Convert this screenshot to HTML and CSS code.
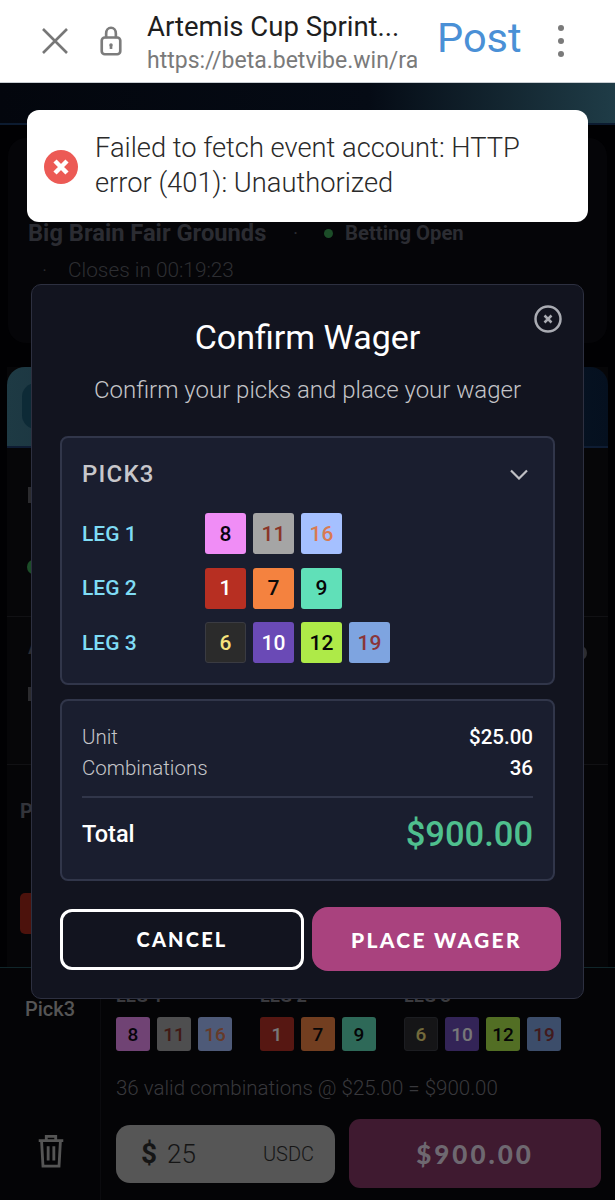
FILE: index.html
```html
<!DOCTYPE html>
<html lang="en">
<head>
<meta charset="utf-8">
<title>Artemis Cup Sprint</title>
<link rel="stylesheet" href="styles.css">
</head>
<body>
<header class="chrome">
  <svg class="chrome-x" viewBox="0 0 26 26"><path d="M1 1 25 25M25 1 1 25"/></svg>
  <svg class="chrome-lock" viewBox="0 0 24 34"><path d="M6.500 14V8.500a5.500 6.500 0 0 1 11 0V14"/><rect x="1.500" y="13" width="21" height="19" rx="3.500"/><circle cx="12" cy="21.500" r="2" class="fill"/><path d="M12 22v4"/></svg>
  <div class="chrome-titles">
    <div class="chrome-title">Artemis Cup Sprint...</div>
    <div class="chrome-url">https://beta.betvibe.win/ra</div>
  </div>
  <span class="chrome-post">Post</span>
  <div class="chrome-dots"><i></i><i></i><i></i></div>
</header>

<main class="page">
  <div class="hero"></div>
  <section class="event-card">
    <div class="event-line">
      <span class="event-name">Big Brain Fair Grounds</span>
      <span class="event-sep">·</span>
      <span class="event-dot"></span>
      <span class="event-status">Betting Open</span>
    </div>
    <div class="event-close"><span class="close-sep">·</span>Closes in 00:19:23</div>
  </section>
  <section class="market">
    <div class="market-head"><div class="market-logo"></div></div>
    <div class="market-row market-row-a"><span class="ghost-bar"></span><span class="ghost-dot"></span></div>
    <div class="market-row market-row-b"><span class="ghost-a">A</span><span class="ghost-bar2"></span><span class="ghost-knob"></span></div>
  </section>
  <section class="picks-block">
    <div class="ghost-p">P</div>
    <div class="ghost-red"></div>
  </section>
  <section class="slip">
    <div class="slip-side">
      <span class="slip-name">Pick3</span>
      <svg class="trash" viewBox="0 0 28 36"><path d="M1 7h26M9 6V2.500h10V6M4 7l1.500 27h17L24 7M11 13v15M17 13v15"/></svg>
    </div>
    <div class="slip-main">
      <div class="slip-legs">
        <div class="slip-leg"><span class="slip-leg-name">LEG 1</span><div class="slip-chips">
          <span class="chip chip-small c8">8</span><span class="chip chip-small c11">11</span><span class="chip chip-small c16">16</span></div></div>
        <div class="slip-leg"><span class="slip-leg-name">LEG 2</span><div class="slip-chips">
          <span class="chip chip-small c1">1</span><span class="chip chip-small c7">7</span><span class="chip chip-small c9">9</span></div></div>
        <div class="slip-leg"><span class="slip-leg-name">LEG 3</span><div class="slip-chips">
          <span class="chip chip-small c6">6</span><span class="chip chip-small c10">10</span><span class="chip chip-small c12">12</span><span class="chip chip-small c19">19</span></div></div>
      </div>
      <p class="slip-note">36 valid combinations @ $25.00 = $900.00</p>
      <div class="slip-actions">
        <div class="slip-input"><b>$</b><span class="slip-amount">25</span><span class="slip-unit">USDC</span></div>
        <div class="slip-submit">$900.00</div>
      </div>
    </div>
  </section>
</main>

<div class="toast">
  <svg class="toast-icon" viewBox="0 0 34 34"><circle cx="17" cy="17" r="17"/><path d="M11 11 23 23M23 11 11 23"/></svg>
  <div class="toast-text">Failed to fetch event account: HTTP error (401): Unauthorized</div>
</div>

<div class="modal">
  <svg class="modal-close" viewBox="0 0 28 28"><circle cx="14" cy="14" r="12.500"/><path d="M10.500 10.500 17.500 17.500M17.500 10.500 10.500 17.500"/></svg>
  <h1 class="modal-title">Confirm Wager</h1>
  <p class="modal-sub">Confirm your picks and place your wager</p>
  <div class="panel panel-picks">
    <div class="panel-head">
      <span class="panel-name">PICK3</span>
      <svg class="chevron" viewBox="0 0 18 11"><path d="M1 1.500 9 9.500 17 1.500"/></svg>
    </div>
    <div class="leg">
      <span class="leg-name">LEG 1</span>
      <div class="chips"><span class="chip c8">8</span><span class="chip c11">11</span><span class="chip c16">16</span></div>
    </div>
    <div class="leg">
      <span class="leg-name">LEG 2</span>
      <div class="chips"><span class="chip c1">1</span><span class="chip c7">7</span><span class="chip c9">9</span></div>
    </div>
    <div class="leg">
      <span class="leg-name">LEG 3</span>
      <div class="chips"><span class="chip c6">6</span><span class="chip c10">10</span><span class="chip c12">12</span><span class="chip c19">19</span></div>
    </div>
  </div>
  <div class="panel panel-summary">
    <div class="sum-row"><span>Unit</span><b>$25.00</b></div>
    <div class="sum-row"><span>Combinations</span><b>36</b></div>
    <div class="sum-total"><span>Total</span><b>$900.00</b></div>
  </div>
  <div class="modal-actions">
    <button class="btn btn-cancel">CANCEL</button>
    <button class="btn btn-place">PLACE WAGER</button>
  </div>
</div>
</body>
</html>
```
FILE: styles.css
```css
* { box-sizing: border-box; }
html, body { margin: 0; padding: 0; }
body {
  position: relative;
  width: 615px;
  height: 1200px;
  overflow: hidden;
  background: #010103;
  font-family: Roboto, "Liberation Sans", sans-serif;
  display: flex;
  flex-direction: column;
}

/* browser bar */
.chrome {
  height: 83px;
  flex: none;
  background: #fff;
  border-bottom: 1px solid #c9ced3;
  display: flex;
  align-items: center;
  position: relative;
}
.chrome-x { width: 26px; height: 26px; margin-left: 42px; flex: none; fill: none; stroke: #777; stroke-width: 2.6; }
.chrome-lock { width: 24px; height: 30px; margin-left: 31px; flex: none; fill: none; stroke: #7c7c7c; stroke-width: 3; }
.chrome-lock .fill { fill: #7c7c7c; stroke: none; }
.chrome-titles { width: 270px; margin-left: 24px; flex: none; overflow: hidden; padding-top: 3px; }
.chrome-title { font-size: 27.500px; line-height: 32px; color: #1e1e1e; white-space: nowrap; }
.chrome-url { font-size: 23px; line-height: 29px; margin-top: 3px; color: #7a7a7a; white-space: nowrap; }
.chrome-post { margin: 0 0 6px 20px; font-size: 41.500px; line-height: 48px; color: #4a90d6; flex: none; }
.chrome-dots { margin-left: 36px; display: flex; flex-direction: column; gap: 7px; flex: none; }
.chrome-dots i { display: block; width: 6px; height: 6px; border-radius: 50%; background: #7a7a7a; }

/* dimmed page */
.page { flex: 1; display: flex; flex-direction: column; min-height: 0; }
.hero { height: 42px; flex: none; background: linear-gradient(90deg, #03060d 0%, #050b15 60%, #1f3c47 100%); border-bottom: 2px solid #0c1b30; }
.event-card {
  height: 205px;
  margin: 13px 8px 0;
  padding-top: 80px;
  padding-left: 20px;
  flex: none;
  background: #050508;
  border-radius: 18px;
}
.event-line { display: flex; align-items: center; height: 30px; }
.event-name { font-size: 23.700px; font-weight: 700; color: #2b2c32; }
.event-sep { margin-left: 27px; color: #2b2c32; font-size: 18px; }
.event-dot { width: 9px; height: 9px; margin-left: 26px; border-radius: 50%; background: #1c4d28; }
.event-status { margin-left: 12px; font-size: 20.300px; font-weight: 700; color: #2b2c32; }
.event-close { margin-top: 10px; font-size: 20.800px; font-weight: 300; color: #2d2e32; }
.close-sep { display: inline-block; width: 40px; padding-left: 14px; }
.market { margin: 24px 7px 0; flex: none; background: #060608; }
.market-head {
  height: 81px;
  padding: 16px 0 0 15px;
  border-radius: 18px 18px 0 0;
  background: linear-gradient(90deg, #1e3a44 0%, #0d2030 50%, #05101f 100%);
  border-bottom: 2px solid #0e1c33;
}
.market-logo { width: 40px; height: 46px; border-radius: 14px; background: #0d2a36; }
.market-row { position: relative; border-bottom: 1px solid #111114; }
.market-row-a { height: 169px; }
.market-row-b { height: 148px; }
.ghost-bar { display: block; position: absolute; left: 21px; top: 39px; width: 6px; height: 16px; background: #2b2b2e; }
.ghost-dot { display: block; position: absolute; left: 20px; top: 112px; width: 12px; height: 14px; border-radius: 50%; background: #1c4d28; }
.ghost-a { position: absolute; left: 21px; top: 18px; font-size: 20px; font-weight: 500; color: #2b2c32; }
.ghost-bar2 { position: absolute; left: 21px; top: 70px; width: 6px; height: 14px; background: #2b2b2e; }
.ghost-knob { position: absolute; right: 21px; top: 29px; width: 12px; height: 14px; border-radius: 50%; background: #2d2d30; }
.picks-block { height: 202px; flex: none; margin: 0 7px; padding: 34px 0 0 13px; background: #050507; }
.ghost-p { font-size: 20px; font-weight: 700; color: #33343a; }
.ghost-red { margin-top: 70px; width: 30px; height: 41px; border-radius: 5px; background: #4c120c; }
.slip {
  flex: 1;
  display: flex;
  background: #040406;
  border-top: 1px solid #10262a;
  min-height: 0;
}
.slip-side {
  width: 101px;
  flex: none;
  border-right: 1px solid #0b0b0e;
  padding: 29px 0 0 25px;
  display: flex;
  flex-direction: column;
}
.slip-name { font-size: 20px; font-weight: 500; color: #555; line-height: 24px; }
.trash { margin: 113px 0 0 12px; width: 28px; height: 34px; fill: none; stroke: #555; stroke-width: 3; }
.slip-main { flex: 1; padding: 19px 14px 0 15px; min-width: 0; }
.slip-legs { display: flex; gap: 28px; }
.slip-leg { display: flex; flex-direction: column; gap: 13px; }
.slip-leg-name { font-size: 18px; font-weight: 700; line-height: 17px; color: #3a3a3e; }
.slip-chips { display: flex; gap: 7px; }
.slip-note { margin: 24px 0 0; font-size: 20.500px; line-height: 26px; font-weight: 300; color: #38383c; white-space: nowrap; }
.slip-actions { display: flex; align-items: center; gap: 14px; margin-top: 18px; }
.slip-input {
  width: 219px;
  height: 58px;
  flex: none;
  display: flex;
  align-items: center;
  padding: 0 21px 0 25px;
  border-radius: 14px;
  background: #565656;
  color: #151515;
}
.slip-input b { font-size: 28px; }
.slip-amount { margin-left: 10px; font-size: 26px; font-weight: 300; }
.slip-unit { margin-left: auto; font-size: 20px; font-weight: 300; }
.slip-submit {
  width: 252px;
  height: 69px;
  flex: none;
  border-radius: 11px;
  background: #3f1a30;
  color: #6e6870;
  font-family: Lato, sans-serif;
  font-weight: 900;
  font-size: 26px;
  letter-spacing: 3px;
  display: flex;
  align-items: center;
  justify-content: center;
}

/* chips */
.chip {
  width: 41px;
  height: 41px;
  flex: none;
  border-radius: 3px;
  display: flex;
  align-items: center;
  justify-content: center;
  font-size: 21px;
  font-weight: 500;
}
.chip-small { width: 34px; height: 34px; font-size: 19px; opacity: .46; }
.c8 { background: #f08df6; color: #0a0410; }
.c11 { background: #a5a5a5; color: #8a3528; }
.c16 { background: #a5c0ff; color: #d97a52; }
.c1 { background: #b72f22; color: #fff; }
.c7 { background: #f4823f; color: #0a0a0a; }
.c9 { background: #60e0b8; color: #060606; }
.c6 { background: #2b2b2b; color: #f5e27c; border: 1px solid #3a3b42; }
.c10 { background: #6a4ab6; color: #fff; }
.c12 { background: #aeea48; color: #060606; }
.c19 { background: #7ea4e0; color: #8a3538; }

/* toast */
.toast {
  position: absolute;
  left: 27px;
  top: 110px;
  width: 561px;
  height: 112px;
  padding: 0 17px;
  background: #fff;
  border-radius: 12px;
  display: flex;
  align-items: center;
  gap: 17px;
}
.toast-icon { width: 34px; height: 34px; flex: none; margin-top: 1px; }
.toast-icon circle { fill: #ec5a55; }
.toast-icon path { stroke: #fff; stroke-width: 4.500; fill: none; }
.toast-text { font-size: 27.300px; line-height: 35px; font-weight: 300; color: #2a2a2a; }

/* modal */
.modal {
  position: absolute;
  left: 31px;
  top: 284px;
  width: 553px;
  height: 715px;
  padding: 0 28px;
  background: #12141f;
  border: 1px solid #2d3040;
  border-radius: 10px;
}
.modal-close { position: absolute; right: 21px; top: 20px; width: 28px; height: 28px; fill: none; stroke: #a9abb2; stroke-width: 2.500; }
.modal-title { margin: 31px 0 0; text-align: center; font-size: 34px; line-height: 42px; font-weight: 400; color: #fff; }
.modal-sub { margin: 16px 0 0; text-align: center; font-size: 24px; line-height: 32px; font-weight: 300; color: #c4c4c8; white-space: nowrap; }
.panel {
  width: 495px;
  background: #1a1e2f;
  border: 2px solid #31364a;
  border-radius: 8px;
}
.panel-picks { height: 249px; margin-top: 30px; padding: 0 20px; }
.panel-head { display: flex; align-items: center; justify-content: space-between; height: 72px; margin-bottom: 3px; padding-right: 5px; }
.panel-name { font-size: 24px; font-weight: 500; letter-spacing: 1.200px; color: #c7c7cb; }
.chevron { width: 18px; height: 11px; fill: none; stroke: #c0c0c5; stroke-width: 2.200; }
.leg { display: flex; align-items: center; height: 41px; margin-bottom: 13.700px; }
.leg-name { width: 123px; flex: none; font-size: 21px; font-weight: 500; color: #7fdcf5; }
.chips { display: flex; gap: 7px; }
.panel-summary { height: 182px; margin-top: 14px; padding: 20px 20px 0; }
.sum-row { display: flex; justify-content: space-between; align-items: center; height: 31px; font-size: 20.500px; font-weight: 300; color: #c6c6ca; }
.sum-row b { font-weight: 500; color: #fff; font-size: 20.500px; }
.sum-total { margin-top: 13px; padding-top: 14px; border-top: 2px solid #31364a; display: flex; justify-content: space-between; align-items: center; color: #fff; font-size: 23.500px; font-weight: 500; }
.sum-total b { font-size: 34.500px; font-weight: 500; line-height: 44px; color: #4fc08e; }
.modal-actions { display: flex; align-items: center; gap: 8px; margin-top: 26px; }
.btn {
  flex: none;
  font-family: Lato, sans-serif;
  font-weight: 900;
  font-size: 20px;
  letter-spacing: 2.200px;
  color: #fff;
  display: flex;
  align-items: center;
  justify-content: center;
  padding: 0;
}
.btn-cancel { width: 244px; height: 61px; background: #12141f; border: 3px solid #fff; border-radius: 12px; }
.btn-place { width: 249px; height: 64px; font-size: 21px; letter-spacing: 2.300px; background: #a9427e; border: 0; border-radius: 16px; }
```
